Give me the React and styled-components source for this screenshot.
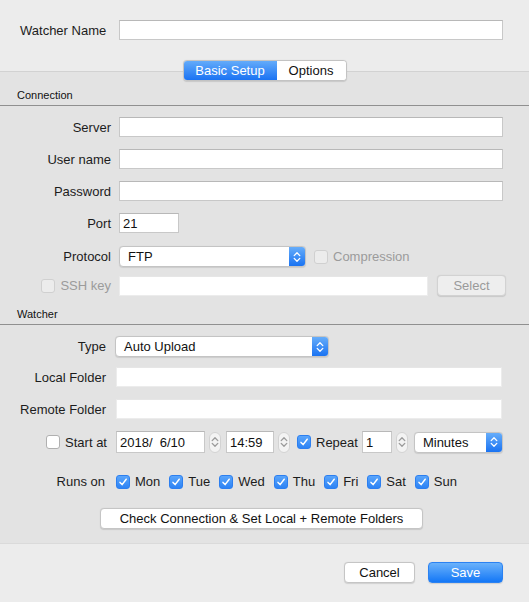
import React from 'react';
import styled, { createGlobalStyle } from 'styled-components';

const GlobalStyle = createGlobalStyle`
  html, body {
    margin: 0;
    padding: 0;
    background: #ececec;
  }
  * {
    box-sizing: border-box;
  }
`;

const Chevrons = ({ color = '#fff' }) => (
  <svg width="8" height="12" viewBox="0 0 8 12">
    <path d="M1.2 4.6 L4 1.8 L6.8 4.6" fill="none" stroke={color} strokeWidth="1.3" strokeLinecap="round" strokeLinejoin="round" />
    <path d="M1.2 7.4 L4 10.2 L6.8 7.4" fill="none" stroke={color} strokeWidth="1.3" strokeLinecap="round" strokeLinejoin="round" />
  </svg>
);

const Check = ({ checked, disabled }) => (
  <StyledCheck $checked={checked} $disabled={disabled}>
    {checked && (
      <svg width="10" height="10" viewBox="0 0 10 10">
        <path d="M2 5.4 L4.1 7.6 L8.2 2.2" fill="none" stroke="#fff" strokeWidth="1.5" strokeLinecap="round" strokeLinejoin="round" />
      </svg>
    )}
  </StyledCheck>
);

const Popup = ({ value, width }) => (
  <StyledPopup $width={width}>
    <StyledPopupText>{value}</StyledPopupText>
    <StyledPopupArrow>
      <Chevrons />
    </StyledPopupArrow>
  </StyledPopup>
);

const Stepper = () => (
  <StyledStepper>
    <Chevrons color="#9a9a9a" />
  </StyledStepper>
);

const days = ['Mon', 'Tue', 'Wed', 'Thu', 'Fri', 'Sat', 'Sun'];

const App = () => {
  return (
    <StyledWindow>
      <GlobalStyle />
      <StyledHeader>
        <StyledNameRow>
          <StyledLabel $plain>Watcher Name</StyledLabel>
          <StyledField />
        </StyledNameRow>
        <StyledTabs>
          <StyledTab $active>Basic Setup</StyledTab>
          <StyledTab>Options</StyledTab>
        </StyledTabs>
      </StyledHeader>

      <StyledPanel>
        <StyledSectionTitle $top={17}>Connection</StyledSectionTitle>
        <StyledStack>
          <StyledRow $label={111} $gap={8}>
            <StyledLabel>Server</StyledLabel>
            <StyledField />
          </StyledRow>
          <StyledRow $label={111} $gap={8}>
            <StyledLabel>User name</StyledLabel>
            <StyledField />
          </StyledRow>
          <StyledRow $label={111} $gap={8}>
            <StyledLabel>Password</StyledLabel>
            <StyledField />
          </StyledRow>
          <StyledRow $label={111} $gap={8}>
            <StyledLabel>Port</StyledLabel>
            <StyledField defaultValue="21" $width={60} />
          </StyledRow>
          <StyledRow $label={111} $gap={8} $shift={1}>
            <StyledLabel>Protocol</StyledLabel>
            <StyledInline $gap={8}>
              <Popup value="FTP" width={187} />
              <StyledCheckLabel $disabled>
                <Check disabled />
                Compression
              </StyledCheckLabel>
            </StyledInline>
          </StyledRow>
          <StyledRow $label={111} $gap={8} $shift={-4}>
            <StyledCheckLabel $disabled $right>
              <Check disabled />
              SSH key
            </StyledCheckLabel>
            <StyledInline $gap={9}>
              <StyledField $plain $width={309} />
              <StyledButton $disabled $width={69}>Select</StyledButton>
            </StyledInline>
          </StyledRow>
        </StyledStack>

        <StyledSectionTitle $top={12}>Watcher</StyledSectionTitle>
        <StyledStack $pad={27}>
          <StyledRow $label={106} $gap={9}>
            <StyledLabel>Type</StyledLabel>
            <Popup value="Auto Upload" width={214} />
          </StyledRow>
          <StyledRow $label={106} $gap={10} $shift={-2}>
            <StyledLabel>Local Folder</StyledLabel>
            <StyledField $plain />
          </StyledRow>
          <StyledRow $label={106} $gap={10}>
            <StyledLabel>Remote Folder</StyledLabel>
            <StyledField $plain />
          </StyledRow>
          <StyledRow $label={107} $gap={9}>
            <StyledCheckLabel $right>
              <Check />
              Start at
            </StyledCheckLabel>
            <StyledInline $gap={4}>
              <StyledField defaultValue="2018/  6/10" $width={89} $tall />
              <Stepper />
              <StyledField defaultValue="14:59" $width={48} $tall $left={1} />
              <Stepper />
              <StyledCheckLabel $left={3}>
                <Check checked />
                Repeat
              </StyledCheckLabel>
              <StyledField defaultValue="1" $width={30} $tall />
              <Stepper />
              <StyledInline $left={2}>
                <Popup value="Minutes" width={89} />
              </StyledInline>
            </StyledInline>
          </StyledRow>
          <StyledRow $label={105} $gap={11} $shift={9}>
            <StyledLabel>Runs on</StyledLabel>
            <StyledInline $gap={9}>
              {days.map((day) => (
                <StyledCheckLabel key={day}>
                  <Check checked />
                  {day}
                </StyledCheckLabel>
              ))}
            </StyledInline>
          </StyledRow>
        </StyledStack>

        <StyledCenter>
          <StyledButton $width={323}>Check Connection &amp; Set Local + Remote Folders</StyledButton>
        </StyledCenter>
      </StyledPanel>

      <StyledFooter>
        <StyledButton $width={71}>Cancel</StyledButton>
        <StyledButton $primary $width={75}>Save</StyledButton>
      </StyledFooter>
    </StyledWindow>
  );
};

// =================== ESTILOS CSS ===================
const StyledWindow = styled.div`
  display: flex;
  flex-direction: column;
  width: 529px;
  min-height: 100vh;
  font-family: 'Liberation Sans', Arial, sans-serif;
  font-size: 13px;
  color: #1c1c1c;
  background: #ececec;
`;
const StyledHeader = styled.div`
  display: flex;
  flex-direction: column;
  padding: 20px 26px 0 20px;
`;
const StyledNameRow = styled.div`
  display: grid;
  grid-template-columns: 88px 1fr;
  column-gap: 11px;
  align-items: center;
`;
const StyledTabs = styled.div`
  position: relative;
  z-index: 1;
  display: flex;
  align-self: center;
  height: 21px;
  margin: 20px 0 -10px 6px;
  border: 1px solid #c3c3c3;
  border-radius: 4px;
  background: #fff;
  box-shadow: 0 0.5px 1px rgba(0, 0, 0, 0.12);
  overflow: hidden;
`;
const StyledTab = styled.div`
  display: flex;
  align-items: center;
  justify-content: center;
  width: ${(p) => (p.$active ? '93px' : '69px')};
  font-size: 13px;
  color: ${(p) => (p.$active ? '#fff' : '#111')};
  background: ${(p) => (p.$active ? 'linear-gradient(#63abfa, #1b73f3)' : '#fff')};
`;
const StyledPanel = styled.div`
  display: flex;
  flex-direction: column;
  padding-bottom: 14px;
  background: #e3e3e3;
  border-top: 1px solid #d2d2d2;
  border-bottom: 1px solid #dadada;
`;
const StyledSectionTitle = styled.div`
  margin-top: ${(p) => p.$top}px;
  padding: 0 17px 3px;
  line-height: 13px;
  font-size: 11px;
  color: #111;
  border-bottom: 1px solid #909090;
`;
const StyledStack = styled.div`
  display: flex;
  flex-direction: column;
  gap: 12px;
  padding: 11px ${(p) => p.$pad || 26}px 0 0;
`;
const StyledRow = styled.div`
  display: grid;
  grid-template-columns: ${(p) => p.$label}px 1fr;
  column-gap: ${(p) => p.$gap}px;
  align-items: center;
  margin-top: ${(p) => p.$shift || 0}px;
`;
const StyledLabel = styled.label`
  text-align: ${(p) => (p.$plain ? 'left' : 'right')};
  white-space: nowrap;
  color: #1c1c1c;
`;
const StyledInline = styled.div`
  display: flex;
  align-items: center;
  gap: ${(p) => p.$gap || 10}px;
  margin-left: ${(p) => p.$left || 0}px;
`;
const StyledField = styled.input`
  flex: ${(p) => (p.$width ? 'none' : '1')};
  width: ${(p) => (p.$width ? `${p.$width}px` : '100%')};
  height: ${(p) => (p.$tall ? 22 : 20)}px;
  margin: 0 0 0 ${(p) => p.$left || 0}px;
  padding: 0 3px;
  font-family: inherit;
  font-size: 13px;
  color: #111;
  white-space: pre;
  background: #fff;
  border: 1px solid ${(p) => (p.$plain ? '#ececec' : '#c8c8c8')};
  border-top-color: ${(p) => (p.$plain ? '#e6e6e6' : '#b8b8b8')};
  outline: none;
`;
const StyledCheck = styled.span`
  display: inline-flex;
  align-items: center;
  justify-content: center;
  flex: none;
  width: 14px;
  height: 14px;
  border-radius: 3px;
  border: 1px solid ${(p) => (p.$checked ? '#2c7ff0' : p.$disabled ? '#d0d0d0' : '#b0b0b0')};
  background: ${(p) =>
    p.$checked ? 'linear-gradient(#5aa5fb, #2d83f5)' : p.$disabled ? '#ececec' : '#fff'};
`;
const StyledCheckLabel = styled.span`
  display: flex;
  align-items: center;
  justify-content: ${(p) => (p.$right ? 'flex-end' : 'flex-start')};
  gap: 5px;
  margin-left: ${(p) => p.$left || 0}px;
  white-space: nowrap;
  color: ${(p) => (p.$disabled ? '#9b9b9b' : '#1c1c1c')};
`;
const StyledPopup = styled.div`
  display: flex;
  align-items: stretch;
  width: ${(p) => p.$width}px;
  height: 21px;
  border: 1px solid #c4c4c4;
  border-radius: 4px;
  background: #fff;
  box-shadow: 0 0.5px 1px rgba(0, 0, 0, 0.1);
  overflow: hidden;
`;
const StyledPopupText = styled.span`
  flex: 1;
  display: flex;
  align-items: center;
  padding-left: 8px;
  color: #111;
`;
const StyledPopupArrow = styled.span`
  display: flex;
  align-items: center;
  justify-content: center;
  width: 16px;
  background: linear-gradient(#66adfa, #1a73f2);
`;
const StyledStepper = styled.span`
  display: flex;
  align-items: center;
  justify-content: center;
  flex: none;
  width: 12px;
  height: 21px;
  border: 1px solid #d3d3d3;
  border-radius: 6px;
  background: #f3f3f3;
`;
const StyledButton = styled.button`
  display: flex;
  align-items: center;
  justify-content: center;
  flex: none;
  width: ${(p) => p.$width}px;
  height: 21px;
  padding: 0;
  margin-right: ${(p) => (p.$disabled ? -3 : 0)}px;
  font-family: inherit;
  font-size: 13px;
  color: ${(p) => (p.$primary ? '#fff' : p.$disabled ? '#9a9a9a' : '#111')};
  background: ${(p) =>
    p.$primary ? 'linear-gradient(#6ab2fb, #1477f6)' : p.$disabled ? '#eeeeee' : '#fff'};
  border: 1px solid ${(p) => (p.$primary ? '#2b82f2' : p.$disabled ? '#d2d2d2' : '#c5c5c5')};
  border-radius: 4px;
  box-shadow: 0 0.5px 1px rgba(0, 0, 0, 0.12);
`;
const StyledCenter = styled.div`
  display: flex;
  justify-content: center;
  padding: 19px 6px 0 0;
`;
const StyledFooter = styled.div`
  flex: 1;
  display: flex;
  justify-content: flex-end;
  align-items: flex-start;
  gap: 13px;
  padding: 18px 26px 0;
  background: #ececec;
`;

export default App;
